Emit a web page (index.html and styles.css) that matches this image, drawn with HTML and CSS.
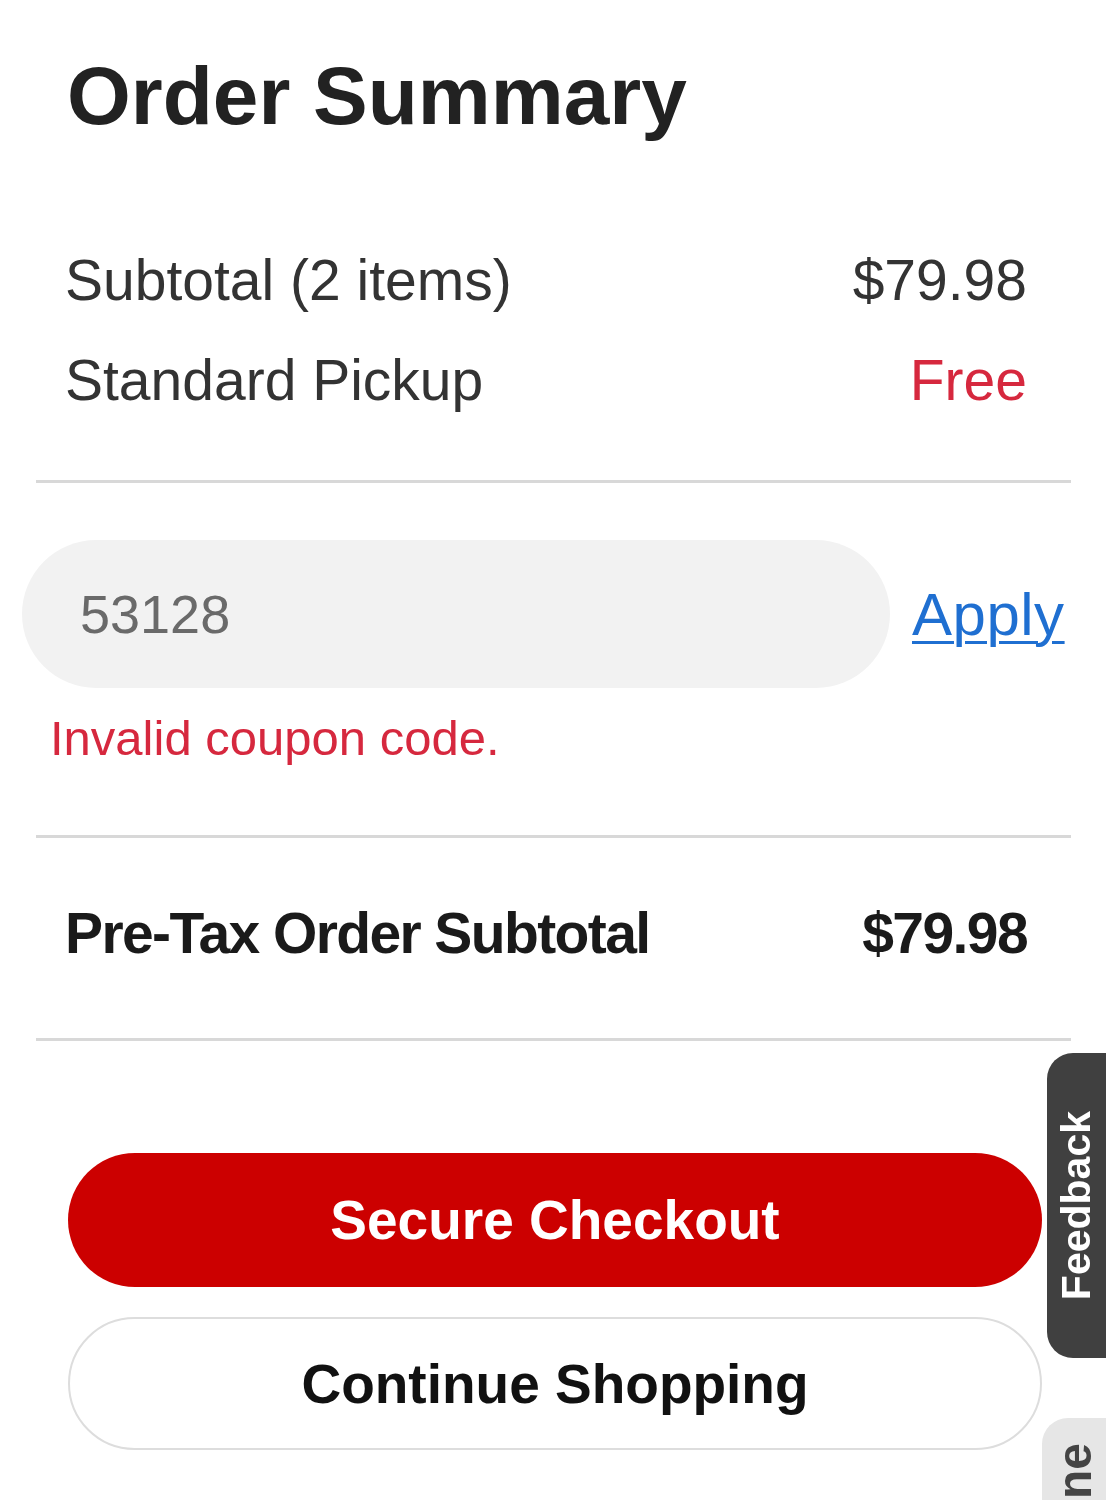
FILE: index.html
```html
<!DOCTYPE html>
<html lang="en">
<head>
<meta charset="utf-8">
<title>Order Summary</title>
<link rel="stylesheet" href="styles.css">
</head>
<body>
<main class="summary">
  <h1 class="title">Order Summary</h1>

  <section class="lines">
    <div class="row"><span>Subtotal (2 items)</span><span>$79.98</span></div>
    <div class="row"><span>Standard Pickup</span><span class="free">Free</span></div>
  </section>

  <hr class="divider divider-first">

  <section class="coupon">
    <div class="coupon-input">53128</div>
    <a class="apply" href="#">Apply</a>
  </section>
  <p class="error">Invalid coupon code.</p>

  <hr class="divider divider-second">

  <section class="total">
    <div class="row row-total"><span>Pre-Tax Order Subtotal</span><span>$79.98</span></div>
  </section>

  <hr class="divider divider-third">

  <div class="actions">
    <button class="btn btn-primary">Secure Checkout</button>
    <button class="btn btn-secondary">Continue Shopping</button>
  </div>
</main>

<div class="tab tab-feedback"><span>Feedback</span></div>
<div class="tab tab-online"><span>Online</span></div>
</body>
</html>
```

FILE: styles.css
```css
html, body {
  margin: 0;
  padding: 0;
  background: #ffffff;
  overflow: hidden;
}

body {
  font-family: "Liberation Sans", Arial, sans-serif;
  color: #333333;
}

.summary {
  display: flex;
  flex-direction: column;
  padding-top: 46px;
}

.title {
  margin: 0 0 84px 67px;
  font-size: 82px;
  line-height: 100px;
  font-weight: 700;
  color: #222222;
}

.lines,
.total {
  display: flex;
  flex-direction: column;
  padding: 0 79px 0 65px;
}

.row {
  display: flex;
  justify-content: space-between;
  font-size: 57px;
  line-height: 100px;
  color: #333333;
}

.free {
  color: #d6283e;
}

.divider {
  border: 0;
  height: 3px;
  background: #d8d8d8;
  margin: 0 35px 0 36px;
}

.divider-first {
  margin-top: 50px;
}

.coupon {
  display: flex;
  align-items: center;
  margin: 57px 0 0 22px;
}

.coupon-input {
  box-sizing: border-box;
  width: 868px;
  height: 148px;
  border-radius: 74px;
  background: #f2f2f2;
  padding-left: 58px;
  display: flex;
  align-items: center;
  font-size: 54px;
  color: #6a6a6a;
}

.apply {
  margin-left: 22px;
  font-size: 60px;
  color: #1f6fd1;
  text-decoration: underline;
  text-decoration-thickness: 3px;
  text-underline-offset: 6px;
  letter-spacing: 0.5px;
}

.error {
  margin: 20px 0 0 50px;
  font-size: 49px;
  line-height: 60px;
  color: #d6283e;
}

.divider-second {
  margin-top: 67px;
}

.total {
  margin-top: 45px;
}

.row-total {
  font-weight: 700;
  color: #1a1a1a;
  letter-spacing: -1.6px;
}

.divider-third {
  margin-top: 55px;
}

.actions {
  display: flex;
  flex-direction: column;
  gap: 30px;
  margin: 112px 64px 0 68px;
}

.btn {
  box-sizing: border-box;
  height: 134px;
  border-radius: 67px;
  font-family: "Liberation Sans", Arial, sans-serif;
  font-size: 55px;
  font-weight: 700;
  cursor: pointer;
}

.btn-primary {
  background: #cc0000;
  color: #ffffff;
  border: 0;
}

.btn-secondary {
  background: #ffffff;
  color: #111111;
  border: 2px solid #dddddd;
  height: 133px;
}

.tab {
  position: fixed;
  right: 0;
  display: flex;
  justify-content: center;
  box-sizing: border-box;
  border-radius: 26px 0 0 26px;
}

.tab span {
  writing-mode: vertical-rl;
  transform: rotate(180deg);
  font-family: "Liberation Sans", Arial, sans-serif;
}

.tab-feedback {
  top: 1053px;
  width: 59px;
  height: 305px;
  background: #404040;
  align-items: center;
}

.tab-feedback span {
  color: #ffffff;
  font-size: 41px;
  font-weight: 700;
}

.tab-online {
  top: 1418px;
  width: 64px;
  height: 260px;
  background: #e6e6e6;
  align-items: flex-start;
  padding-top: 25px;
}

.tab-online span {
  color: #444444;
  font-size: 48px;
  font-weight: 700;
}
```
